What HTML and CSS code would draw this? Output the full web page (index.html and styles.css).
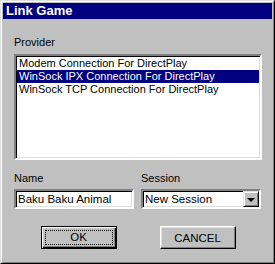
FILE: index.html
```html
<!DOCTYPE html>
<html lang="en">
<head>
    <meta charset="UTF-8">
    <title>Link Game</title>
    <link rel="stylesheet" href="styles.css">
</head>
<body>
    <div class="window">
        <div class="frame">
            <div class="title-bar">Link Game</div>
            <div class="dialog">
                <div class="label provider-label">Provider</div>
                <ul class="listbox">
                    <li>Modem Connection For DirectPlay</li>
                    <li class="selected">WinSock IPX Connection For DirectPlay</li>
                    <li>WinSock TCP Connection For DirectPlay</li>
                </ul>
                <div class="fields">
                    <div class="field">
                        <div class="label">Name</div>
                        <div class="textbox">Baku Baku Animal</div>
                    </div>
                    <div class="field">
                        <div class="label">Session</div>
                        <div class="combo">
                            <span class="combo-text">New Session</span>
                            <span class="combo-btn"><span class="arrow"></span></span>
                        </div>
                    </div>
                </div>
                <div class="buttons">
                    <button class="btn btn-default"><span class="focus">OK</span></button>
                    <button class="btn">CANCEL</button>
                </div>
            </div>
        </div>
    </div>
</body>
</html>
```

FILE: styles.css
```css
body {
    margin: 0;
    font-family: "Liberation Sans", Arial, sans-serif;
    font-size: 11px;
    color: #000;
    background: #c0c0c0;
}
.window {
    width: 275px;
    height: 264px;
    box-sizing: border-box;
    border: 1px solid;
    border-color: #dfdfdf #000 #000 #dfdfdf;
}
.frame {
    height: 100%;
    box-sizing: border-box;
    border: 1px solid;
    border-color: #fff #808080 #808080 #fff;
    padding: 1px;
}
.title-bar {
    height: 16px;
    line-height: 16px;
    padding-left: 3px;
    background: #000080;
    color: #fff;
    font-weight: bold;
    font-size: 13px;
}
.dialog {
    padding: 0 10px 0 11px;
}
.label {
    line-height: 13px;
}
.provider-label {
    margin-top: 17px;
    margin-bottom: 5px;
}
.listbox {
    list-style: none;
    margin: 0;
    padding: 0 1px;
    height: 106px;
    box-sizing: border-box;
    border: 2px solid;
    border-color: #808080 #fff #fff #808080;
    box-shadow: inset 1px 1px 0 #000, inset -1px -1px 0 #dfdfdf;
    background: #fff;
}
.listbox li {
    line-height: 13px;
    padding-left: 2px;
    white-space: nowrap;
}
.listbox li:first-child {
    margin-top: 1px;
}
.listbox .selected {
    background: #000080;
    color: #fff;
}
.fields {
    display: flex;
    gap: 7px;
    margin-top: 12px;
}
.field .label {
    margin-bottom: 4px;
}
.textbox, .combo {
    width: 120px;
    height: 20px;
    box-sizing: border-box;
    border: 2px solid;
    border-color: #808080 #fff #fff #808080;
    box-shadow: inset 1px 1px 0 #000, inset -1px -1px 0 #dfdfdf;
    background: #fff;
    line-height: 16px;
    padding-left: 2px;
    font-size: 11.5px;
}
.combo {
    display: flex;
    justify-content: space-between;
    padding-right: 0;
}
.combo-btn {
    width: 16px;
    height: 16px;
    box-sizing: border-box;
    background: #c0c0c0;
    border: 1px solid;
    border-color: #dfdfdf #000 #000 #dfdfdf;
    box-shadow: inset 1px 1px 0 #fff, inset -1px -1px 0 #808080;
    display: flex;
    align-items: center;
    justify-content: center;
}
.arrow {
    width: 0;
    height: 0;
    border-left: 4px solid transparent;
    border-right: 4px solid transparent;
    border-top: 4px solid #000;
    margin-top: 1px;
}
.buttons {
    display: flex;
    justify-content: center;
    gap: 43px;
    margin-top: 17px;
}
.btn {
    width: 76px;
    height: 23px;
    box-sizing: border-box;
    padding: 0;
    font-family: "Liberation Sans", Arial, sans-serif;
    font-size: 11.5px;
    color: #000;
    background: #c0c0c0;
    border: 1px solid;
    border-color: #fff #000 #000 #fff;
    box-shadow: inset -1px -1px 0 #808080, inset 1px 1px 0 #dfdfdf;
}
.btn-default {
    border: 1px solid #000;
    box-shadow: inset 1px 1px 0 #fff, inset -1px -1px 0 #000, inset -2px -2px 0 #808080;
    padding: 3px;
}
.focus {
    display: block;
    height: 100%;
    box-sizing: border-box;
    border: 1px dotted #000;
    line-height: 13px;
}
```
